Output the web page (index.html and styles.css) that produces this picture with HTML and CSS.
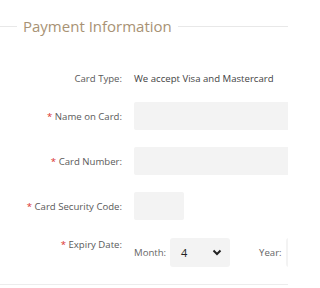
FILE: index.html
```html
<!DOCTYPE html>
<html>
<head>
<meta charset="utf-8">
<link rel="stylesheet" href="styles.css">
</head>
<body>
<div class="panel">
  <div class="legend">
    <span class="rule rule-left"></span>
    <span class="legend-text">Payment Information</span>
    <span class="rule rule-right"></span>
  </div>
  <div class="form">
    <div class="row row-type">
      <div class="label">Card Type:</div>
      <div class="value">We accept Visa and Mastercard</div>
    </div>
    <div class="row">
      <div class="label"><span class="req">*</span> Name on Card:</div>
      <div class="value"><div class="input input-wide"></div></div>
    </div>
    <div class="row">
      <div class="label"><span class="req">*</span> Card Number:</div>
      <div class="value"><div class="input input-wide"></div></div>
    </div>
    <div class="row">
      <div class="label"><span class="req">*</span> Card Security Code:</div>
      <div class="value"><div class="input input-small"></div></div>
    </div>
    <div class="row row-expiry">
      <div class="label label-top"><span class="req">*</span> Expiry Date:</div>
      <div class="value expiry">
        <span class="sub">Month:</span>
        <div class="select">
          <span>4</span>
          <svg class="chev" width="10" height="7" viewBox="0 0 10 7"><path d="M1.5 1.5 L5 5 L8.5 1.5" fill="none" stroke="#222" stroke-width="2"/></svg>
        </div>
        <span class="sub year">Year:</span>
        <div class="select select-year"></div>
      </div>
    </div>
  </div>
  <div class="bottom"></div>
</div>
</body>
</html>
```
FILE: styles.css
```css
html, body {
  margin: 0;
  padding: 0;
  background: #ffffff;
}
body {
  font-family: "Open Sans", "Noto Sans", sans-serif;
  width: 288px;
  height: 288px;
  overflow: hidden;
}
.panel {
  padding-top: 16px;
}
.legend {
  display: flex;
  align-items: center;
  height: 20px;
}
.rule {
  height: 1px;
  background: #e8e8e8;
}
.rule-left {
  width: 17px;
}
.rule-right {
  flex: 1;
}
.legend-text {
  color: #a89274;
  font-size: 15px;
  padding: 0 6px;
  line-height: 20px;
  white-space: nowrap;
}
.form {
  margin-top: 32px;
}
.row {
  display: grid;
  grid-template-columns: 122px 1fr;
  column-gap: 12px;
  align-items: center;
  height: 28px;
  margin-bottom: 17px;
}
.row-type {
  height: 20px;
  margin-bottom: 14px;
}
.label {
  text-align: right;
  font-size: 9.6px;
  color: #5a5a5a;
  white-space: nowrap;
}
.req {
  color: #d9302c;
}
.value {
  font-size: 9.6px;
  color: #444444;
  white-space: nowrap;
  min-width: 0;
}
.input {
  height: 28px;
  background: #f3f3f3;
  border-radius: 2px;
}
.input-wide {
  width: 200px;
}
.input-small {
  width: 50px;
}
.row-expiry {
  height: 29px;
  margin-top: 18px;
  align-items: start;
}
.label-top {
  line-height: 14px;
}
.expiry {
  display: flex;
  align-items: center;
  height: 29px;
}
.sub {
  color: #666666;
  font-size: 9.6px;
}
.select {
  width: 60px;
  height: 29px;
  margin-left: 4px;
  background: #f3f3f3;
  border-radius: 3px;
  display: flex;
  align-items: center;
  justify-content: space-between;
  padding: 0 8px 0 11px;
  box-sizing: border-box;
  font-size: 11px;
  color: #222222;
  flex-shrink: 0;
}
.year {
  margin-left: 29px;
}
.select-year {
  margin-left: 4px;
  width: 40px;
}
.bottom {
  margin-top: 15px;
  height: 1px;
  background: #ececec;
}
```
